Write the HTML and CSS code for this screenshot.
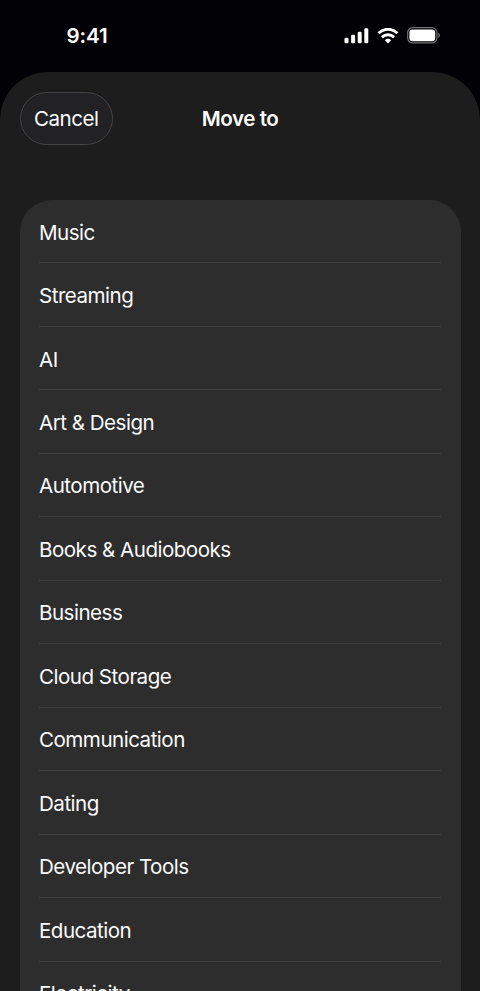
FILE: index.html
```html
<!DOCTYPE html>
<html lang="en">
<head>
<meta charset="utf-8">
<meta name="viewport" content="width=device-width, initial-scale=1">
<title>Move to</title>
<link rel="stylesheet" href="styles.css">
</head>
<body>
<div class="status">
  <time class="clock">9:41</time>
  <div class="indicators">
    <svg class="signal" width="26" height="16" viewBox="0 0 26 16" fill="#fff">
      <rect x="0.5" y="9.8" width="4" height="5.4" rx="1.2"/>
      <rect x="7.1" y="6.8" width="4" height="8.4" rx="1.2"/>
      <rect x="13.7" y="3.8" width="4" height="11.4" rx="1.2"/>
      <rect x="20.3" y="0.2" width="4" height="15" rx="1.2"/>
    </svg>
    <svg class="wifi" width="22" height="16" viewBox="0 0 22 16" fill="none" stroke="#fff" stroke-width="2.9">
      <path d="M1.5 5.3C7-.1 15-.1 20.5 5.3"/>
      <path d="M4.9 9.2C8.4 5.9 13.6 5.9 17.1 9.2"/>
      <path d="M11 15.5 7.8 12.2Q11 9.4 14.2 12.2Z" fill="#fff" stroke="none"/>
    </svg>
    <svg class="battery" width="34" height="17" viewBox="0 0 34 17">
      <rect x="0.7" y="0.7" width="29.2" height="15.2" rx="4.9" fill="none" stroke="#737373" stroke-width="1.2"/>
      <rect x="2.4" y="2.4" width="25.8" height="11.8" rx="3.3" fill="#fff"/>
      <path d="M31.3 5.8Q33 6.6 33 8.3T31.3 10.8Z" fill="#737373"/>
    </svg>
  </div>
</div>
<main class="sheet">
  <header class="bar">
    <button class="cancel">Cancel</button>
    <h1 class="title">Move to</h1>
  </header>
  <ul class="list">
    <li class="row">Music</li>
    <li class="row">Streaming</li>
    <li class="row">AI</li>
    <li class="row">Art &amp; Design</li>
    <li class="row">Automotive</li>
    <li class="row">Books &amp; Audiobooks</li>
    <li class="row">Business</li>
    <li class="row">Cloud Storage</li>
    <li class="row">Communication</li>
    <li class="row">Dating</li>
    <li class="row">Developer Tools</li>
    <li class="row">Education</li>
    <li class="row">Electricity</li>
  </ul>
</main>
</body>
</html>
```
FILE: styles.css
```css
* {
  box-sizing: border-box;
}

body {
  margin: 0;
  height: 991px;
  overflow: hidden;
  display: flex;
  flex-direction: column;
  background: #020106;
  color: #fafafa;
  font-family: Inter, "Liberation Sans", sans-serif;
  font-size: 20.6px;
}

.status {
  flex: none;
  height: 72px;
  padding: 0 39.5px 1px 66.5px;
  display: flex;
  align-items: center;
  justify-content: space-between;
}

.clock {
  font-size: 20.6px;
  font-weight: 600;
  letter-spacing: -0.1px;
}

.indicators {
  display: flex;
  align-items: center;
  gap: 7px;
}

.battery {
  margin-left: 1px;
}

.sheet {
  flex: none;
  height: 919px;
  padding: 20px 19.5px 0;
  overflow: hidden;
  border-radius: 48px 48px 0 0;
  background: #1d1d1d;
}

.bar {
  display: grid;
  grid-template-columns: 1fr auto 1fr;
  align-items: center;
  height: 53px;
  margin-bottom: 55px;
}

.cancel {
  justify-self: start;
  width: 93.4px;
  height: 53px;
  padding: 0;
  border: 1px solid #444;
  border-radius: 27px;
  background: #222224;
  color: inherit;
  font: inherit;
  letter-spacing: -0.5px;
}

.title {
  margin: 0;
  font-size: 20.6px;
  font-weight: 600;
  letter-spacing: -0.45px;
}

.list {
  margin: 0;
  padding: 0 19.5px;
  list-style: none;
  border-radius: 32px 32px 0 0;
  background: #2d2d2d;
}

.row {
  height: 63.47px;
  padding-top: 0.6px;
  line-height: 64px;
  border-bottom: 1px solid #3f3f3f;
  letter-spacing: -0.52px;
}
```
